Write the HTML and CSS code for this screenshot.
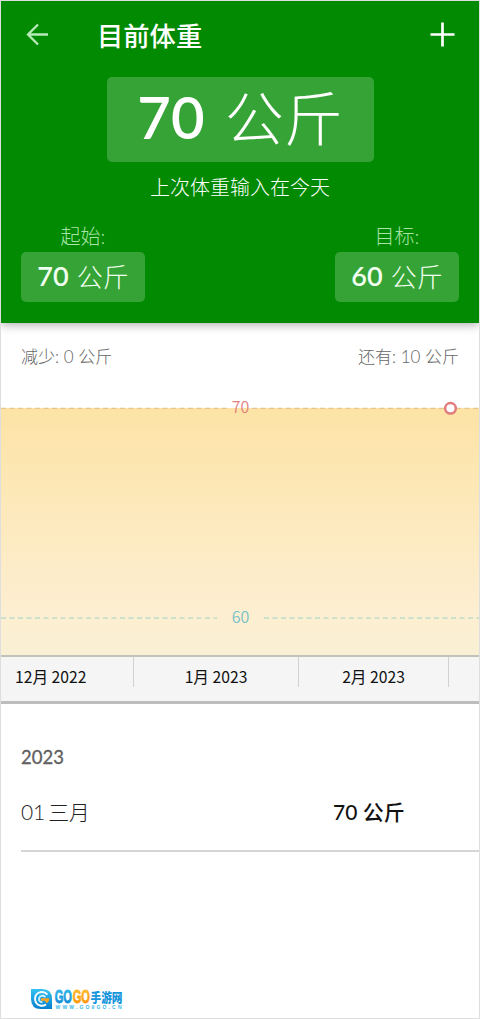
FILE: index.html
```html
<!DOCTYPE html>
<html lang="zh-CN">
<head>
<meta charset="utf-8">
<title>目前体重</title>
<link rel="stylesheet" href="styles.css">
</head>
<body>
<main class="screen">
  <header class="hero">
    <div class="bar">
      <svg class="back" width="24" height="24" viewBox="0 0 24 24"><path d="M22 12.5H2M12 2.5L2 12.5L12 22.5"/></svg>
      <h1 class="title">目前体重</h1>
      <svg class="add" width="26" height="26" viewBox="0 0 26 26"><path d="M12.5 .5V24.5M.5 12.5H24.5"/></svg>
    </div>
    <div class="current"><b>70</b><span>公斤</span></div>
    <p class="last">上次体重输入在今天</p>
    <div class="ends">
      <div class="end"><span class="end-label">起始:</span><div class="badge"><b>70</b><span>公斤</span></div></div>
      <div class="end"><span class="end-label">目标:</span><div class="badge"><b>60</b><span>公斤</span></div></div>
    </div>
  </header>
  <section class="summary"><span>减少: 0 公斤</span><span>还有: 10 公斤</span></section>
  <svg class="chart" width="478" height="260" viewBox="1 395 478 260">
    <defs>
      <linearGradient id="area" x1="0" y1="0" x2="0" y2="1">
        <stop offset="0" stop-color="#fce3a5"/>
        <stop offset=".8" stop-color="#fdeed0"/>
        <stop offset="1" stop-color="#f9f0d5"/>
      </linearGradient>
    </defs>
    <rect x="1" y="408" width="478" height="248" fill="url(#area)"/>
    <path class="start-line" d="M1 408.3H230M252 408.3H479"/>
    <path class="goal-line" d="M1 618H217M264 618H479"/>
    <text class="start-text" x="240.5" y="413">70</text>
    <text class="goal-text" x="240.5" y="623">60</text>
    <circle class="point" cx="450.5" cy="408.3" r="5.3"/>
  </svg>
  <div class="axis">
    <span class="month december">12月 2022</span>
    <span class="month january">1月 2023</span>
    <span class="month february">2月 2023</span>
  </div>
  <section class="history">
    <h2 class="year">2023</h2>
    <div class="entry"><span class="date">01 三月</span><span class="value">70 公斤</span></div>
  </section>
  <footer class="footer">
    <svg width="94" height="24" viewBox="0 0 94 24">
      <defs>
        <linearGradient id="blue" x1="0" y1="0" x2="0" y2="1"><stop offset="0" stop-color="#35c3f1"/><stop offset="1" stop-color="#087fce"/></linearGradient>
        <linearGradient id="gold" x1="0" y1="0" x2="0" y2="1"><stop offset="0" stop-color="#ffc52c"/><stop offset="1" stop-color="#ff8b00"/></linearGradient>
      </defs>
      <path fill="url(#blue)" d="M1 1H12Q22 1 22 11V21H11Q1 21 1 11Z"/>
      <path fill="none" stroke="#fff" stroke-width="1.9" d="M17.5 6.5Q14.5 3.5 10.5 4.2Q5 5.5 5 11Q5.5 17 11 17.8Q14 18 16 16.5"/>
      <path fill="none" stroke="#c9efff" stroke-width="1.8" d="M15.5 9Q13 7 10.5 8.2Q8 10.5 9.5 13Q10.5 14.3 12.5 14.3"/>
      <path fill="#ffa321" d="M11 10.3H19.5Q19.5 13.5 16.5 15.5L15 12.8H11Z"/>
      <text class="brand blue" x="24.7" y="15.3" textLength="17.3" lengthAdjust="spacingAndGlyphs">GO</text>
      <text class="brand gold" x="42.7" y="15.3" textLength="17.3" lengthAdjust="spacingAndGlyphs">GO</text>
      <text class="brand-cn" x="60.5" y="14" textLength="32" lengthAdjust="spacingAndGlyphs">手游网</text>
      <text class="site" x="25.5" y="21" textLength="66">WWW.GO9GO.CN</text>
    </svg>
  </footer>
</main>
</body>
</html>
```
FILE: styles.css
```css
* { box-sizing: border-box; }
body { margin: 0; font-family: Lato, "Noto Sans CJK SC", sans-serif; background: #fff; }
h1, h2, p { margin: 0; }
.screen { width: 480px; height: 1019px; border: 1px solid #dedede; display: flex; flex-direction: column; overflow: hidden; }
.hero { height: 323px; flex: none; background: #028a02; color: #fff; margin-top: -1px; border-top: 1px solid #afe5af; box-shadow: 0 2px 9px rgba(0,0,0,.32); display: flex; flex-direction: column; align-items: center; }
.bar { width: 100%; height: 76px; padding: 21px 23px 0 25px; display: flex; align-items: flex-start; }
.back, .add { fill: none; stroke: #b6eab6; stroke-width: 2.3; }
.add { stroke: #fff; stroke-width: 2.7; margin-left: auto; }
.title { font-size: 26.3px; line-height: 28px; font-weight: 500; margin-left: 47px; }
.current { width: 267px; height: 85px; flex: none; border-radius: 5px; background: #36a336; display: flex; justify-content: center; align-items: flex-start; gap: 20px; }
.current b { font-size: 58px; line-height: 80px; font-weight: 600; }
.current span { font-size: 59px; line-height: 84px; font-weight: 300; }
.last { font-size: 20px; line-height: 28px; margin-top: 11px; font-weight: 300; }
.ends { width: 100%; padding: 0 20px; margin-top: 22px; display: flex; justify-content: space-between; }
.end { display: flex; flex-direction: column; align-items: center; width: 124px; }
.end-label { font-size: 20px; line-height: 26px; height: 29px; font-weight: 300; color: #a8e4a8; }
.badge { width: 124px; height: 50px; border-radius: 5px; background: #36a336; display: flex; align-items: center; justify-content: center; gap: 8px; line-height: 50px; color: #f1fff0; }
.badge b { font-size: 27px; line-height: 48px; height: 50px; font-weight: 600; }
.badge span { font-size: 26px; font-weight: 300; }
.summary { display: flex; justify-content: space-between; padding: 20px 20px 0; height: 72px; font-size: 17px; line-height: 27px; font-weight: 300; color: #666; }
.chart { flex: none; display: block; }
.chart text { font: 16px "Noto Sans CJK SC", sans-serif; font-weight: 350; text-anchor: middle; }
.start-line, .goal-line { fill: none; stroke-width: 1.3; stroke-dasharray: 5 3.5; }
.start-line { stroke: #e8c392; }
.goal-line { stroke: #bddbc9; }
.chart .start-text { fill: #e3807c; }
.chart .goal-text { fill: #79bfc8; }
.point { fill: #fff; stroke: #e27c7d; stroke-width: 2.5; }
.axis { height: 49px; flex: none; background: #f5f5f5; border-top: 2px solid #c4c1bb; border-bottom: 3px solid #bdbdbd; display: flex; align-items: flex-start; font-family: "Noto Sans CJK SC", sans-serif; font-size: 15.7px; line-height: 40px; }
.month { height: 30px; border-right: 1px solid #d1d1d1; color: #111; text-align: center; }
.december { width: 133px; text-align: left; padding-left: 14px; }
.january { width: 165px; }
.february { width: 150px; }
.history { height: 148px; flex: none; margin-left: 20px; border-bottom: 2px solid #d5d5d5; }
.year { font-size: 18.5px; line-height: 24px; font-weight: 400; -webkit-text-stroke: .3px #606060; padding-top: 41px; color: #606060; }
.entry { display: flex; height: 30px; margin-top: 28px; line-height: 30px; font-size: 21px; color: #222; }
.date { width: 312px; font-weight: 300; word-spacing: -2px; letter-spacing: -.3px; }
.value { font-weight: 500; color: #111; }
.footer { margin: auto 0 6px 29px; height: 24px; }
.footer svg { display: block; overflow: visible; }
.brand { font: bold 18.5px "Liberation Sans", sans-serif; stroke-width: .8; }
.blue { fill: url(#blue); stroke: url(#blue); }
.gold { fill: url(#gold); stroke: url(#gold); }
.brand-cn { font: 900 13px "Noto Sans CJK SC", sans-serif; fill: #1495dc; }
.site { font: bold 5px "Liberation Sans", sans-serif; fill: #35b7e9; }
```
